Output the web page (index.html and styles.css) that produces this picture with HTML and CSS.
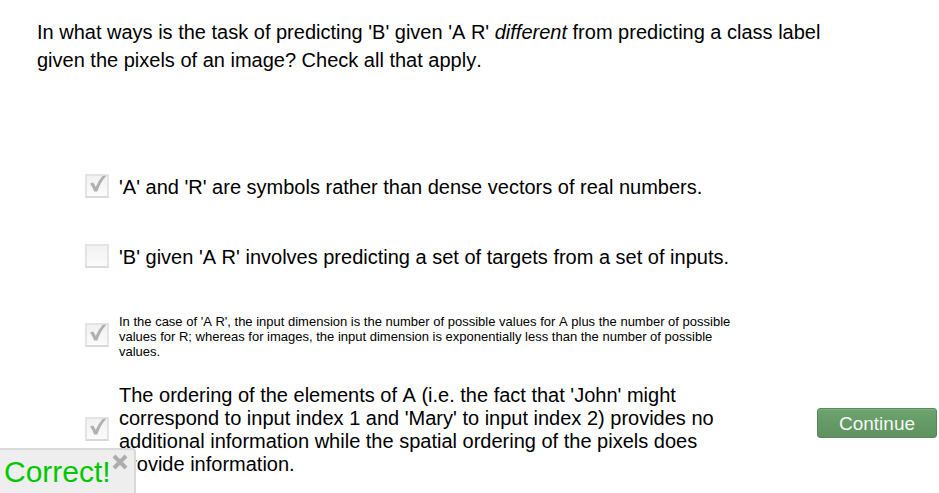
FILE: index.html
```html
<!DOCTYPE html>
<html lang="en">
<head>
<meta charset="utf-8">
<title>Quiz</title>
<link rel="stylesheet" href="styles.css">
</head>
<body>
<svg class="sprites" aria-hidden="true">
  <symbol id="check" viewBox="0 0 24 24"><path d="M5 9.500 L8.200 8.500 Q9.600 10.500 10.700 13 Q13.800 6 17.500 2 L21.500 1.500 Q15.500 8 12.300 17.500 L9.200 17.500 Q7.500 12.500 5 9.500Z"/></symbol>
</svg>
<form class="quiz">
  <p class="question">In what ways is the task of predicting 'B' given 'A R' <em>different</em> from predicting a class label given the pixels of an image? Check all that apply.</p>
  <div class="options">
    <div class="option">
      <span class="box"><input type="checkbox" id="a1" checked><svg class="tick" aria-hidden="true"><use href="#check"/></svg></span>
      <label for="a1">'A' and 'R' are symbols rather than dense vectors of real numbers.</label>
    </div>
    <div class="option">
      <span class="box"><input type="checkbox" id="a2"><svg class="tick" aria-hidden="true"><use href="#check"/></svg></span>
      <label for="a2">'B' given 'A R' involves predicting a set of targets from a set of inputs.</label>
    </div>
    <div class="option option-small">
      <span class="box"><input type="checkbox" id="a3" checked><svg class="tick" aria-hidden="true"><use href="#check"/></svg></span>
      <label for="a3">In the case of 'A R', the input dimension is the number of possible values for A plus the number of possible values for R; whereas for images, the input dimension is exponentially less than the number of possible values.</label>
    </div>
    <div class="option">
      <span class="box"><input type="checkbox" id="a4" checked><svg class="tick" aria-hidden="true"><use href="#check"/></svg></span>
      <label for="a4">The ordering of the elements of A (i.e. the fact that 'John' might correspond to input index 1 and 'Mary' to input index 2) provides no additional information while the spatial ordering of the pixels does provide information.</label>
    </div>
  </div>
  <button class="continue" type="button">Continue</button>
</form>
<div class="result" role="status">
  <span>Correct!</span>
  <button class="close" type="button" aria-label="Close"><svg viewBox="0 0 16 16" aria-hidden="true"><path d="M2 2L14 14M14 2L2 14"/></svg></button>
</div>
</body>
</html>
```

FILE: styles.css
```css
* {
  box-sizing: border-box;
}

body {
  margin: 0;
  background: #fff;
  color: #000;
  font: 20px/23px "Liberation Sans", Arial, sans-serif;
  font-kerning: none;
}

.sprites {
  display: none;
}

.quiz {
  display: grid;
  grid-template-columns: 1fr 120px;
  padding: 18px 2px 0 37px;
}

.question {
  grid-column: 1 / -1;
  margin: 0;
  padding-right: 80px;
  line-height: 28px;
}

.options {
  margin-top: 78px;
  padding: 0 60px 0 48px;
}

.option {
  display: flex;
  align-items: center;
  gap: 10px;
  min-height: 70px;
  padding: 2px 0;
}

.option-small {
  min-height: 90px;
  padding-bottom: 4px;
  font-size: 13px;
  line-height: 15px;
}

.box {
  display: grid;
  flex: none;
  width: 24px;
  height: 24px;
  margin-bottom: 2px;
}

.box input,
.tick {
  grid-area: 1 / 1;
  width: 24px;
  height: 24px;
  margin: 0;
}

.box input {
  appearance: none;
  border: 2px solid #e4e4e4;
  border-bottom-color: #d9d9d9;
  background: linear-gradient(#f1f1f1, #fbfbfb);
}

.tick {
  fill: #b0b0b0;
  pointer-events: none;
  visibility: hidden;
}

.box input:checked + .tick {
  visibility: visible;
}

.continue {
  align-self: end;
  height: 30px;
  margin-bottom: 40px;
  padding: 0;
  border: 1px solid #568a59;
  border-radius: 3px;
  background: linear-gradient(#6ca46e, #5f915f);
  box-shadow: inset 0 1px #7cae7e;
  color: #f4f8f4;
  font: inherit;
  font-size: 19px;
}

.result {
  position: fixed;
  bottom: 0;
  left: 0;
  display: flex;
  align-items: flex-start;
  gap: 1px;
  height: 45px;
  padding: 4px 6px 0 4px;
  border: 2px solid #d9d9d9;
  border-width: 2px 2px 0 0;
  border-radius: 0 4px 0 0;
  background: #eee;
  color: #00c800;
  font-size: 30px;
  line-height: 36px;
}

.close {
  width: 16px;
  height: 16px;
  padding: 0;
  border: 0;
  background: none;
}

.close svg {
  display: block;
  fill: none;
  stroke: #adadad;
  stroke-width: 4;
}
```
